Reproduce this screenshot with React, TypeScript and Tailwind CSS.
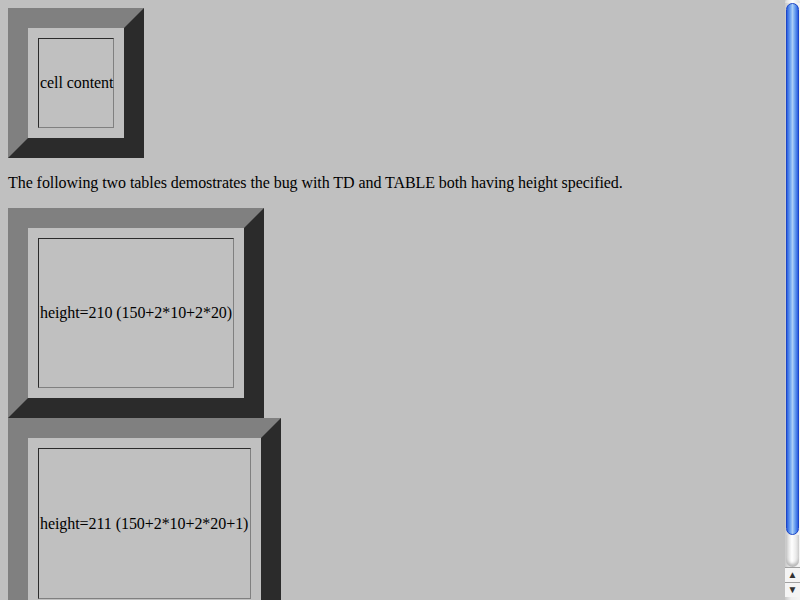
export default function App() {
  return (
    <div className="flex h-screen w-full overflow-hidden bg-[#c0c0c0] font-['Liberation_Serif',serif] text-[16px] tracking-[-0.065px] text-black">
      {/* page */}
      <div className="flex-1 overflow-hidden p-2">
        <BevelTable cellW="w-[76px]" cellH="h-[90px]" text="cell content" />

        <p className="my-4 leading-[18px] whitespace-nowrap">
          The following two tables demostrates the bug with TD and TABLE both
          having height specified.
        </p>

        <BevelTable
          cellW="w-[196px]"
          cellH="h-[150px]"
          text="height=210 (150+2*10+2*20)"
        />
        <BevelTable
          cellW="w-[213px]"
          cellH="h-[151px]"
          text="height=211 (150+2*10+2*20+1)"
        />
      </div>

      {/* scrollbar */}
      <div className="flex w-[15px] shrink-0 flex-col bg-[linear-gradient(to_right,#c8c8c8,#ececec_40%,#f4f4f4)]">
        <div className="h-[3px] rounded-t-full bg-[linear-gradient(to_right,#d8d8d8,#ffffff,#e0e0e0)]" />
        <div className="mx-[1px] h-[532px] rounded-full border border-[#1c46c8] bg-[linear-gradient(to_right,#2a5ee0,#6fa4f0_30%,#a9cdf7_50%,#6fa4f0_70%,#2a5ee0)]" />
        <div className="mx-[1px] h-[32px] rounded-b-full bg-[linear-gradient(to_right,#d0d0d0,#ffffff_45%,#dcdcdc)] shadow-[inset_0_-3px_3px_#b8b8b8]" />
        <div className="flex h-[15px] items-center justify-center border-t border-[#a0a0a0] bg-[#f4f4f4] text-[10px] leading-none text-[#333]">
          ▲
        </div>
        <div className="flex h-[15px] items-center justify-center border-t border-[#a0a0a0] bg-[#f4f4f4] text-[10px] leading-none text-[#333]">
          ▼
        </div>
      </div>
    </div>
  );
}

function BevelTable({
  cellW,
  cellH,
  text,
}: {
  cellW: string;
  cellH: string;
  text: string;
}) {
  return (
    <div className="flex w-fit border-[20px] border-solid border-t-[#808080] border-l-[#808080] border-b-[#2b2b2b] border-r-[#2b2b2b] p-[10px]">
      <div
        className={`flex items-center border border-solid border-t-[#2b2b2b] border-l-[#2b2b2b] border-b-[#808080] border-r-[#808080] px-[1px] whitespace-nowrap ${cellW} ${cellH}`}
      >
        {text}
      </div>
    </div>
  );
}
